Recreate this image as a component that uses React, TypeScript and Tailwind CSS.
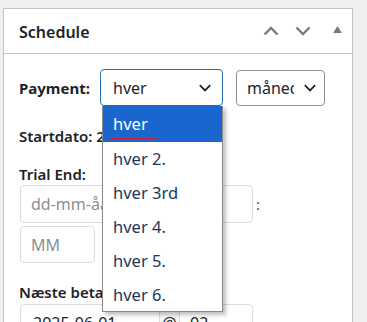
const Chevron = ({ up = false, className = "", w = 2.4 }: { up?: boolean; className?: string; w?: number }) => (
  <svg viewBox="0 0 16 10" className={className} fill="none" stroke="currentColor" strokeWidth={w} strokeLinecap="butt">
    {up ? <path d="M1.5 8.5 8 2l6.5 6.5" /> : <path d="M1.5 1.5 8 8l6.5-6.5" />}
  </svg>
);

const options = ["hver", "hver 2.", "hver 3rd", "hver 4.", "hver 5.", "hver 6."];

export default function App() {
  return (
    <div className="relative w-[367px] h-[322px] overflow-hidden bg-[#f0f0f1] pl-[3px] pt-[8px] font-['Noto_Sans',sans-serif] text-[#1d2327]">
      <div className="w-[350px] h-[330px] border border-[#c3c4c7] bg-white">
        <div className="flex items-center h-[45px] border-b border-[#c3c4c7] pl-[15px] pr-[10px]">
          <h2 className="text-[16px] leading-[20px] font-semibold flex-1 pt-[1px]">Schedule</h2>
          <Chevron up className="w-[16px] h-[10px] text-[#787c82] mr-[16px]" />
          <Chevron className="w-[16px] h-[10px] text-[#787c82] mr-[22px]" />
          <svg viewBox="0 0 10 8" className="w-[9px] h-[7px] text-[#787c82] mb-[3px]" fill="currentColor">
            <path d="M5 0 10 8H0z" />
          </svg>
        </div>
        <div className="pl-[15px] text-[15px] leading-[20px]">
          <div className="flex items-center mt-[15px] h-[37px]">
            <span className="font-bold w-[81px]">Payment:</span>
            <div className="flex items-center w-[123px] h-[37px] border border-[#2271b1] rounded-[4px] pl-[12px] pr-[10px] text-[16px]">
              <span className="flex-1">hver</span>
              <Chevron className="w-[14px] h-[8px] text-[#1d2327]" w={2.2} />
            </div>
            <div className="flex items-center ml-[13px] w-[89px] h-[36px] border border-[#8c8f94] rounded-[4px] pl-[10px] text-[16px]">
              <span className="w-[47px] overflow-hidden whitespace-nowrap">månedlig</span>
              <Chevron className="w-[14px] h-[8px] text-[#1d2327] ml-[9px]" w={2.2} />
            </div>
          </div>
          <div className="mt-[20px] font-semibold whitespace-nowrap">Startdato: 2025-06-01</div>
          <div className="mt-[18px] font-semibold">Trial End:</div>
          <div className="flex items-center mt-[1px]">
            <div className="w-[233px] h-[38px] ml-[1px] border border-[#dcdcde] rounded-[4px] pl-[10px] flex items-center text-[16px] text-[#8c8f94]">dd-mm-åååå</div>
            <span className="ml-[3px] text-[#50575e]">:</span>
          </div>
          <div className="w-[75px] h-[37px] ml-[1px] mt-[3px] border border-[#dcdcde] rounded-[4px] pl-[10px] flex items-center text-[16px] text-[#8c8f94]">MM</div>
          <div className="mt-[19px] font-semibold whitespace-nowrap">Næste betaling:</div>
          <div className="flex items-start mt-[2px] ml-[1px]">
            <div className="w-[140px] h-[38px] border border-[#dcdcde] rounded-l-[4px] pl-[12px] pt-[8px] text-[16px]">2025-06-01</div>
            <div className="w-[19px] h-[38px] border-y border-[#dcdcde] bg-[#f6f7f7] flex justify-center pt-[8px] text-[16px]">@</div>
            <div className="w-[74px] h-[38px] border border-[#dcdcde] rounded-[4px] pl-[10px] pt-[8px] text-[16px]">02</div>
            <span className="ml-[3px] mt-[10px] text-[#50575e]">:</span>
          </div>
        </div>
      </div>

      <div className="absolute left-[102px] top-[106px] w-[121px] h-[206px] bg-white border border-[#8a8a8a] border-t-0 shadow-[3px_3px_4px_rgba(0,0,0,0.25)] text-[16.5px] text-[#1e3658]">
        {options.map((o, i) => (
          <div
            key={o}
            className={i === 0 ? "h-[36px] flex items-center pl-[10px] bg-[#1a66cf] text-white" : "h-[34px] flex items-center pl-[10px]"}
          >
            <span className="relative">
              {o}
              {i === 0 && <span className="absolute left-[-3px] right-[-9px] bottom-[-3px] h-[2.5px] rounded-full bg-[#d0203a]" />}
            </span>
          </div>
        ))}
      </div>
    </div>
  );
}
